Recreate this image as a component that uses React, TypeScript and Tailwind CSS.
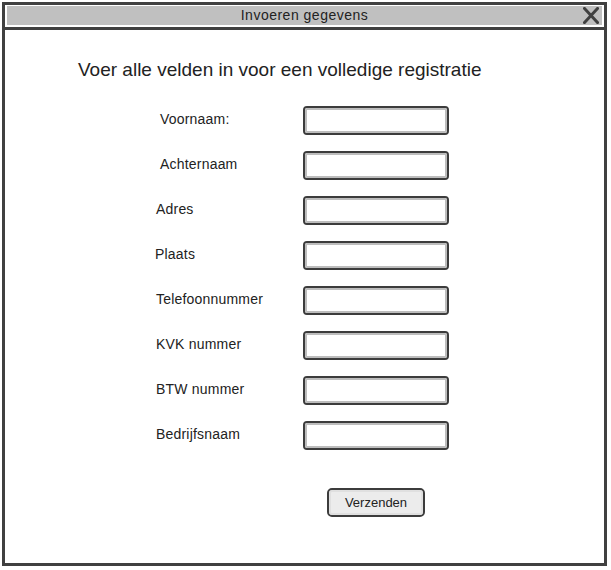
import React from 'react'

const font = { fontFamily: '"Comic Sans MS", "Liberation Sans", sans-serif' }

// label text + small horizontal nudge, as in the mockup
const fields: { label: string; pad: string }[] = [
  { label: 'Voornaam:', pad: 'pl-[5px]' },
  { label: 'Achternaam', pad: 'pl-[5px]' },
  { label: 'Adres', pad: 'pl-[1px]' },
  { label: 'Plaats', pad: 'pl-0' },
  { label: 'Telefoonnummer', pad: 'pl-[1px]' },
  { label: 'KVK nummer', pad: 'pl-[1px]' },
  { label: 'BTW nummer', pad: 'pl-[1px]' },
  { label: 'Bedrijfsnaam', pad: 'pl-[1px]' },
]

function CloseIcon() {
  return (
    <svg width="16" height="17" viewBox="0 0 16 17" className="shrink-0">
      <path d="M1.5 1.5 L14.5 15.5 M14.5 1.5 L1.5 15.5" stroke="#404040" strokeWidth="3" strokeLinecap="square" fill="none" />
    </svg>
  )
}

function Field({ label, pad }: { label: string; pad: string }) {
  return (
    <div className="flex items-center h-[29px]">
      <div className={`w-[148px] text-[14px] tracking-[0.2px] text-[#222] -mt-[3px] ${pad}`}>{label}</div>
      <div className="w-[146px] h-[29px] rounded-[4px] border-2 border-[#3c3c3c] bg-white p-0">
        <div className="w-full h-full rounded-[2px] border-2 border-[#bdbdbd] bg-white" />
      </div>
    </div>
  )
}

export default function App() {
  return (
    <div className="bg-white w-[611px] h-[570px] pt-[2px] pl-[2px]" style={font}>
      <div className="w-[605px] h-[564px] border-[3px] border-[#404040] flex flex-col bg-white">
        {/* title bar */}
        <div className="pt-[1px] px-[2px] pb-[2px]">
          <div className="h-[19px] bg-[#c0c0c0] flex items-center relative">
            <span className="flex-1 text-center text-[14px] tracking-[0.5px] leading-[19px] text-[#222]">Invoeren gegevens</span>
            <div className="absolute right-[3px] top-[1px]">
              <CloseIcon />
            </div>
          </div>
        </div>
        <div className="h-[3px] bg-[#404040]" />

        {/* form */}
        <div className="flex flex-col">
          <h1 className="pt-[28px] pl-[73px] text-[19px] leading-[24px] text-[#222]">
            Voer alle velden in voor een volledige registratie
          </h1>
          <div className="flex flex-col gap-[16px] pt-[24px] pl-[150px]">
            {fields.map((f) => (
              <Field key={f.label} label={f.label} pad={f.pad} />
            ))}
          </div>
          <div className="pt-[38px] pl-[322px]">
            <button className="w-[98px] h-[29px] rounded-[5px] border-2 border-[#3c3c3c] bg-[#bdbdbd] p-0">
              <div className="w-full h-full rounded-[3px] border-2 border-[#e0e0e0] bg-[#ececec] flex items-center justify-center text-[13px] text-[#222]">
                Verzenden
              </div>
            </button>
          </div>
        </div>
      </div>
    </div>
  )
}
